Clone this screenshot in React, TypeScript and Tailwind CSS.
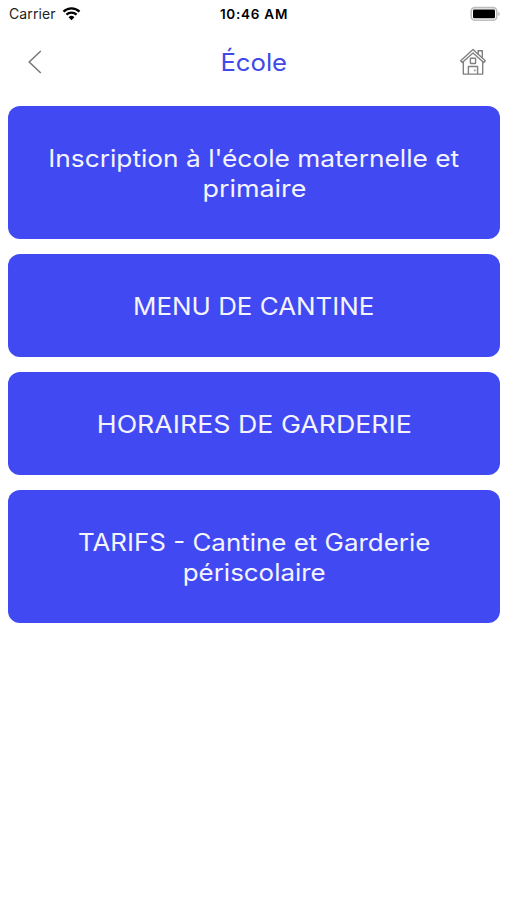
interface MenuLine {
  text: string
  stretch: string
}

interface MenuItem {
  id: string
  lines: MenuLine[]
}

const menuItems: MenuItem[] = [
  {
    id: 'inscription',
    lines: [
      { text: "Inscription à l'école maternelle et", stretch: 'scale-x-[1.095]' },
      { text: 'primaire', stretch: 'scale-x-[1.12]' },
    ],
  },
  { id: 'menu', lines: [{ text: 'MENU DE CANTINE', stretch: 'scale-x-[1.08]' }] },
  { id: 'horaires', lines: [{ text: 'HORAIRES DE GARDERIE', stretch: 'scale-x-[1.115]' }] },
  {
    id: 'tarifs',
    lines: [
      { text: 'TARIFS - Cantine et Garderie', stretch: 'scale-x-[1.08]' },
      { text: 'périscolaire', stretch: 'scale-x-[1.08]' },
    ],
  },
]

function WifiIcon() {
  return (
    <svg className="ml-[6px] h-[14px] w-[19px]" viewBox="0 0 18 14" fill="none">
      <path d="M1 4.6a11.6 11.6 0 0 1 16 0" stroke="#000" strokeWidth="2.4" />
      <path d="M3.9 7.6a7.4 7.4 0 0 1 10.2 0" stroke="#000" strokeWidth="2.2" />
      <path d="M9 13.2 6.1 10.2a4.2 4.2 0 0 1 5.8 0Z" fill="#000" />
    </svg>
  )
}

function BatteryIcon() {
  return (
    <svg className="h-[16px] w-[31px]" viewBox="0 0 31 16" fill="none">
      <rect x="1.2" y="1.6" width="25.6" height="12.6" rx="3.6" stroke="#bdbdbd" strokeWidth="1.6" />
      <rect x="3" y="3.6" width="22" height="8.7" rx="1.2" fill="#000" />
      <path d="M28.3 5.8c1.9.7 1.9 3.6 0 4.3Z" fill="#b4b4b4" />
    </svg>
  )
}

function BackIcon() {
  return (
    <svg className="h-[24px] w-[14px]" viewBox="0 0 14 24" fill="none">
      <path d="M12.8 1 1.2 12l11.6 11" stroke="#777" strokeWidth="1.5" />
    </svg>
  )
}

function HomeIcon() {
  return (
    <svg
      className="h-[28px] w-[28px]"
      viewBox="0 0 28 28"
      fill="none"
      stroke="#808080"
      strokeWidth="1.4"
      strokeLinejoin="round"
    >
      {/* roof and chimney */}
      <path d="M14 1.6 1.7 12.7l1.6 1.9L14 5.1l10.7 9.5 1.6-1.9Z" />
      <path d="M19.2 6.2V2.8h4.1v7M18.5 2.6h5.5" />
      {/* walls */}
      <path d="M4.3 13.8v12.3h19.4V13.8" />
      <rect x="11.4" y="10.3" width="5.2" height="5.2" rx="0.6" />
      <path d="M9.4 26V18.5h9.2V26M15.9 21.6v1.6" />
    </svg>
  )
}

export default function App() {
  return (
    <div className="h-[900px] w-full bg-white font-['Inter',sans-serif]">
      {/* status bar */}
      <div className="grid h-[28px] grid-cols-3 items-center text-[14px] leading-none text-black">
        <div className="flex items-center pl-[9px]">
          <span className="tracking-[0.1px] text-[#222]">Carrier</span>
          <WifiIcon />
        </div>
        <div className="pt-px pl-px text-center text-[13.5px] font-semibold tracking-[0.75px]">10:46 AM</div>
        <div className="flex justify-end pr-[6px]">
          <BatteryIcon />
        </div>
      </div>

      <header className="grid h-[68px] grid-cols-3 items-center pr-[20px] pl-[28px]">
        <button className="flex w-[34px]">
          <BackIcon />
        </button>
        <h1 className="scale-x-[1.07] pt-px pr-[7px] text-center text-[24px] leading-[30px] text-[#4149e8]">
          École
        </h1>
        <button className="flex w-[28px] justify-self-end">
          <HomeIcon />
        </button>
      </header>

      <main className="flex flex-col gap-[15px] pt-[10px] pr-[7px] pl-[8px]">
        {menuItems.map((item) => (
          <button
            key={item.id}
            className="flex flex-col items-center rounded-[12px] bg-[#4149f2] px-4 pt-[37.6px] pb-[35.6px] text-[24px] leading-[29.9px] text-[#f4f4ff]"
          >
            {item.lines.map((line) => (
              <span key={line.text} className={`whitespace-nowrap ${line.stretch}`}>
                {line.text}
              </span>
            ))}
          </button>
        ))}
      </main>
    </div>
  )
}
